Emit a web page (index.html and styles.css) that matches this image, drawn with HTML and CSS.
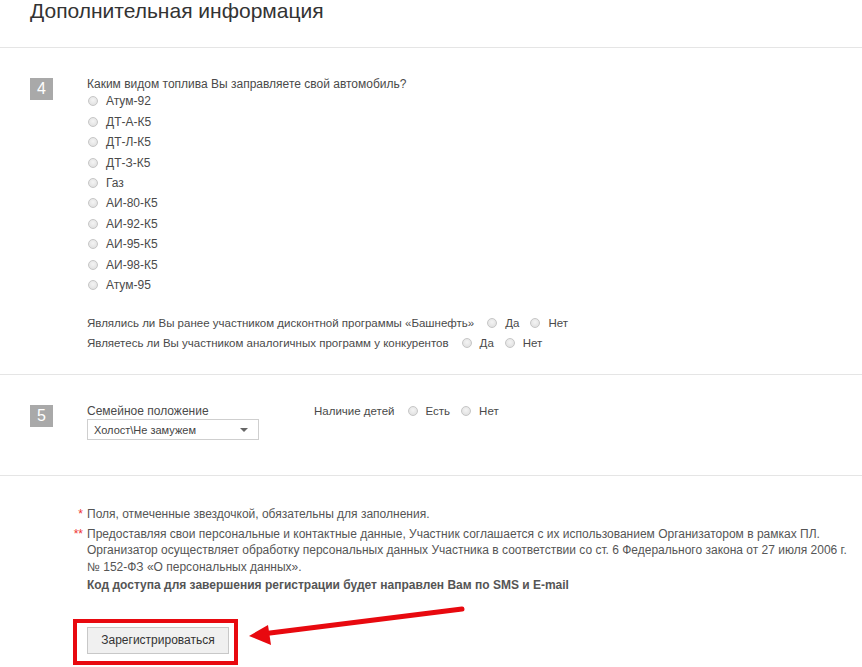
FILE: index.html
```html
<!DOCTYPE html>
<html lang="ru">
  <head>
    <meta charset="UTF-8" />
    <meta name="viewport" content="width=device-width, initial-scale=1.0" />
    <title>Дополнительная информация</title>
    <link rel="stylesheet" href="styles.css">
  </head>
  <body>
    <div class="page">
      <h1 class="title">Дополнительная информация</h1>

      <div class="step">
        <div class="step-num">4</div>
        <div class="step-body">
          <p class="question">Каким видом топлива Вы заправляете свой автомобиль?</p>
          <label class="radio-row"><input type="radio" name="fuel"> Атум-92</label>
          <label class="radio-row"><input type="radio" name="fuel"> ДТ-А-К5</label>
          <label class="radio-row"><input type="radio" name="fuel"> ДТ-Л-К5</label>
          <label class="radio-row"><input type="radio" name="fuel"> ДТ-З-К5</label>
          <label class="radio-row"><input type="radio" name="fuel"> Газ</label>
          <label class="radio-row"><input type="radio" name="fuel"> АИ-80-К5</label>
          <label class="radio-row"><input type="radio" name="fuel"> АИ-92-К5</label>
          <label class="radio-row"><input type="radio" name="fuel"> АИ-95-К5</label>
          <label class="radio-row"><input type="radio" name="fuel"> АИ-98-К5</label>
          <label class="radio-row"><input type="radio" name="fuel"> Атум-95</label>

          <div class="yes-no first">
            <span>Являлись ли Вы ранее участником дисконтной программы «Башнефть»</span>
            <label><input type="radio" name="q1"> Да</label>
            <label><input type="radio" name="q1"> Нет</label>
          </div>
          <div class="yes-no">
            <span>Являетесь ли Вы участником аналогичных программ у конкурентов</span>
            <label><input type="radio" name="q2"> Да</label>
            <label><input type="radio" name="q2"> Нет</label>
          </div>
        </div>
      </div>

      <div class="step step-5">
        <div class="step-num">5</div>
        <div class="step-body family">
          <div class="field">
            <div class="field-label">Семейное положение</div>
            <div class="select">
              <span>Холост\Не замужем</span>
              <span class="caret"></span>
            </div>
          </div>
          <div class="yes-no kids">
            <span>Наличие детей</span>
            <label><input type="radio" name="kids"> Есть</label>
            <label><input type="radio" name="kids"> Нет</label>
          </div>
        </div>
      </div>

      <div class="footer">
        <div class="note"><span class="star">*</span>Поля, отмеченные звездочкой, обязательны для заполнения.</div>
        <div class="note second"><span class="star">**</span>Предоставляя свои персональные и контактные данные, Участник соглашается с их использованием Организатором в рамках ПЛ. Организатор осуществляет обработку персональных данных Участника в соответствии со ст. 6 Федерального закона от 27 июля 2006 г. № 152-ФЗ «О персональных данных».</div>
        <div class="note bold">Код доступа для завершения регистрации будет направлен Вам по SMS и E-mail</div>

        <div class="submit-wrap">
          <div class="highlight">
            <button class="btn">Зарегистрироваться</button>
          </div>
        </div>
      </div>

      <svg class="arrow" width="862" height="667" viewBox="0 0 862 667">
        <line x1="462" y1="609" x2="262" y2="634" stroke="#e8090f" stroke-width="5" stroke-linecap="round" />
        <polygon points="249,636 268,625 271,645" fill="#e8090f" />
      </svg>
    </div>
  </body>
</html>
```

FILE: styles.css
```css
body {
  margin: 0;
  background-color: #fff;
  color: #4a4a4a;
  font-family: "Liberation Sans", Arial, sans-serif;
  font-size: 12px;
}

.page {
  position: relative;
  width: 862px;
  height: 667px;
  overflow: hidden;
}

.title {
  margin: 0;
  padding-left: 30px;
  height: 47px;
  font-size: 21px;
  line-height: 22px;
  font-weight: normal;
  color: #333;
  border-bottom: 1px solid #e5e5e5;
}

.step {
  display: flex;
  gap: 34px;
  padding: 30px 0 0 30px;
  border-bottom: 1px solid #e5e5e5;
  height: 296px;
}

.step-5 {
  height: 70px;
}

.step-num {
  width: 23px;
  height: 22px;
  background-color: #a9a9a9;
  color: #fff;
  font-size: 16px;
  line-height: 22px;
  text-align: center;
}

.question {
  margin: 0;
  line-height: 14px;
  margin-top: -1px;
}

.radio-row {
  display: flex;
  align-items: center;
  height: 20.45px;
  padding-left: 1px;
}

input[type="radio"] {
  appearance: none;
  -webkit-appearance: none;
  width: 10px;
  height: 10px;
  margin: 0 8px 0 0;
  border: 1px solid #c6c6c6;
  border-radius: 50%;
  background: radial-gradient(circle at 50% 40%, #f4f4f4, #dcdcdc);
  flex-shrink: 0;
}

.yes-no {
  display: flex;
  align-items: center;
  height: 20px;
  font-size: 11.5px;
}

.yes-no.first {
  margin-top: 18px;
}

.yes-no span {
  margin-right: 13px;
}

.yes-no label {
  display: flex;
  align-items: center;
  margin-right: 11px;
}

.family {
  display: flex;
  gap: 55px;
}

.field-label {
  line-height: 14px;
  margin-top: -1px;
}

.select {
  display: flex;
  justify-content: space-between;
  align-items: center;
  width: 154px;
  height: 19px;
  margin-top: 1px;
  padding: 0 10px 0 6px;
  border: 1px solid #cfcfcf;
  font-size: 11px;
  color: #444;
}

.caret {
  width: 0;
  height: 0;
  border-left: 4px solid transparent;
  border-right: 4px solid transparent;
  border-top: 4px solid #666;
}

.kids {
  height: 14px;
  margin-top: -1px;
}

.footer {
  padding: 30px 0 0 87px;
  font-size: 12px;
  color: #555;
}

.note {
  position: relative;
  line-height: 16.5px;
}

.note.second {
  margin-top: 3px;
}

.note.bold {
  margin-top: 2px;
  font-weight: bold;
}

.star {
  position: absolute;
  right: 100%;
  margin-right: 4px;
  color: #e33;
}

.submit-wrap {
  margin-top: 25px;
  margin-left: -14px;
}

.highlight {
  display: inline-block;
  border: 4px solid #e8090f;
  padding: 4px 5px 7px 10px;
}

.btn {
  width: 142px;
  height: 27px;
  background-color: #f0f0f0;
  border: 1px solid #c8c8c8;
  font-family: "Liberation Sans", Arial, sans-serif;
  font-size: 12px;
  color: #333;
  cursor: pointer;
}

.arrow {
  position: absolute;
  left: 0;
  top: 0;
  pointer-events: none;
}
```
